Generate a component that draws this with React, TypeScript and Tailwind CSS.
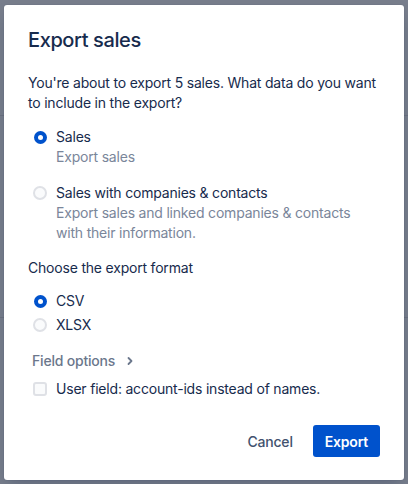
import React, { useState } from "react";

function Radio({ checked }: { checked: boolean }) {
  return (
    <span className="flex h-5 w-4 items-center justify-center">
      {checked ? (
        <span className="flex h-[13px] w-[13px] items-center justify-center rounded-full bg-[#0052cc]">
          <span className="h-[5px] w-[5px] rounded-full bg-white" />
        </span>
      ) : (
        <span className="h-[14px] w-[14px] rounded-full border-2 border-[#dfe1e6] bg-[#fafbfc]" />
      )}
    </span>
  );
}

function RadioOption({
  label,
  desc,
  checked,
  onClick,
}: {
  label: string;
  desc?: string;
  checked: boolean;
  onClick: () => void;
}) {
  return (
    <div className="flex cursor-pointer gap-2 pl-1" onClick={onClick}>
      <Radio checked={checked} />
      <div>
        <div className="text-[14px] leading-5 text-[#172b4d]">{label}</div>
        {desc && <div className="max-w-[310px] text-[14px] leading-5 text-[#7a869a]">{desc}</div>}
      </div>
    </div>
  );
}

export default function App() {
  const [data, setData] = useState("sales");
  const [format, setFormat] = useState("csv");
  const [useIds, setUseIds] = useState(false);

  return (
    <div
      className="relative flex h-[484px] w-[408px] items-start overflow-hidden bg-[#787e8c] pt-[5px] pl-1 tracking-[-0.2px]"
      style={{ fontFamily: "Inter, 'Noto Sans', sans-serif" }}
    >
      {/* faint page content behind the overlay */}
      <div className="absolute top-[115px] left-0 h-px w-full bg-[#6c7280]" />
      <div className="absolute top-[317px] left-0 h-px w-full bg-[#6c7280]" />

      <div className="relative flex h-[475px] w-[400px] flex-col rounded-[3px] bg-white px-6 pt-[23px] pb-[23px] shadow-[0_0_1px_rgba(9,30,66,0.31),0_8px_16px_-4px_rgba(9,30,66,0.25)]">
        <h1 className="text-[20px] leading-6 font-medium tracking-[-0.4px] text-[#172b4d]">Export sales</h1>

        <p className="mt-[21px] text-[14px] leading-5 text-[#172b4d]">
          You're about to export 5 sales. What data do you want to include in the export?
        </p>

        <div className="mt-[14px] flex flex-col gap-4">
          <RadioOption
            label="Sales"
            desc="Export sales"
            checked={data === "sales"}
            onClick={() => setData("sales")}
          />
          <RadioOption
            label="Sales with companies & contacts"
            desc="Export sales and linked companies & contacts with their information."
            checked={data === "full"}
            onClick={() => setData("full")}
          />
        </div>

        <p className="mt-[15px] text-[14px] leading-5 text-[#172b4d]">Choose the export format</p>

        <div className="mt-[13px] flex flex-col gap-1">
          <RadioOption label="CSV" checked={format === "csv"} onClick={() => setFormat("csv")} />
          <RadioOption label="XLSX" checked={format === "xlsx"} onClick={() => setFormat("xlsx")} />
        </div>

        <button className="mt-4 flex items-center gap-[10px] pl-1 text-[14px] leading-5 font-medium text-[#6b778c]">
          Field options
          <svg width="10" height="10" viewBox="0 0 10 10" fill="none">
            <path d="M3.5 2 L6.5 5 L3.5 8" stroke="#6b778c" strokeWidth="1.8" strokeLinecap="round" strokeLinejoin="round" />
          </svg>
        </button>

        <label className="mt-2 flex cursor-pointer items-center gap-2 pl-1" onClick={() => setUseIds(!useIds)}>
          <span className="flex h-5 w-4 items-center justify-center">
            <span
              className={`h-[14px] w-[14px] rounded-[3px] border-2 ${
                useIds ? "border-[#0052cc] bg-[#0052cc]" : "border-[#dfe1e6] bg-[#fafbfc]"
              }`}
            />
          </span>
          <span className="text-[14px] leading-5 text-[#172b4d]">User field: account-ids instead of names.</span>
        </label>

        <div className="mt-auto flex justify-end gap-2">
          <button className="h-8 rounded-[3px] px-3 text-[14px] font-medium text-[#42526e]">Cancel</button>
          <button className="h-8 rounded-[3px] bg-[#0052cc] px-3 text-[14px] font-semibold text-white">Export</button>
        </div>
      </div>
    </div>
  );
}
